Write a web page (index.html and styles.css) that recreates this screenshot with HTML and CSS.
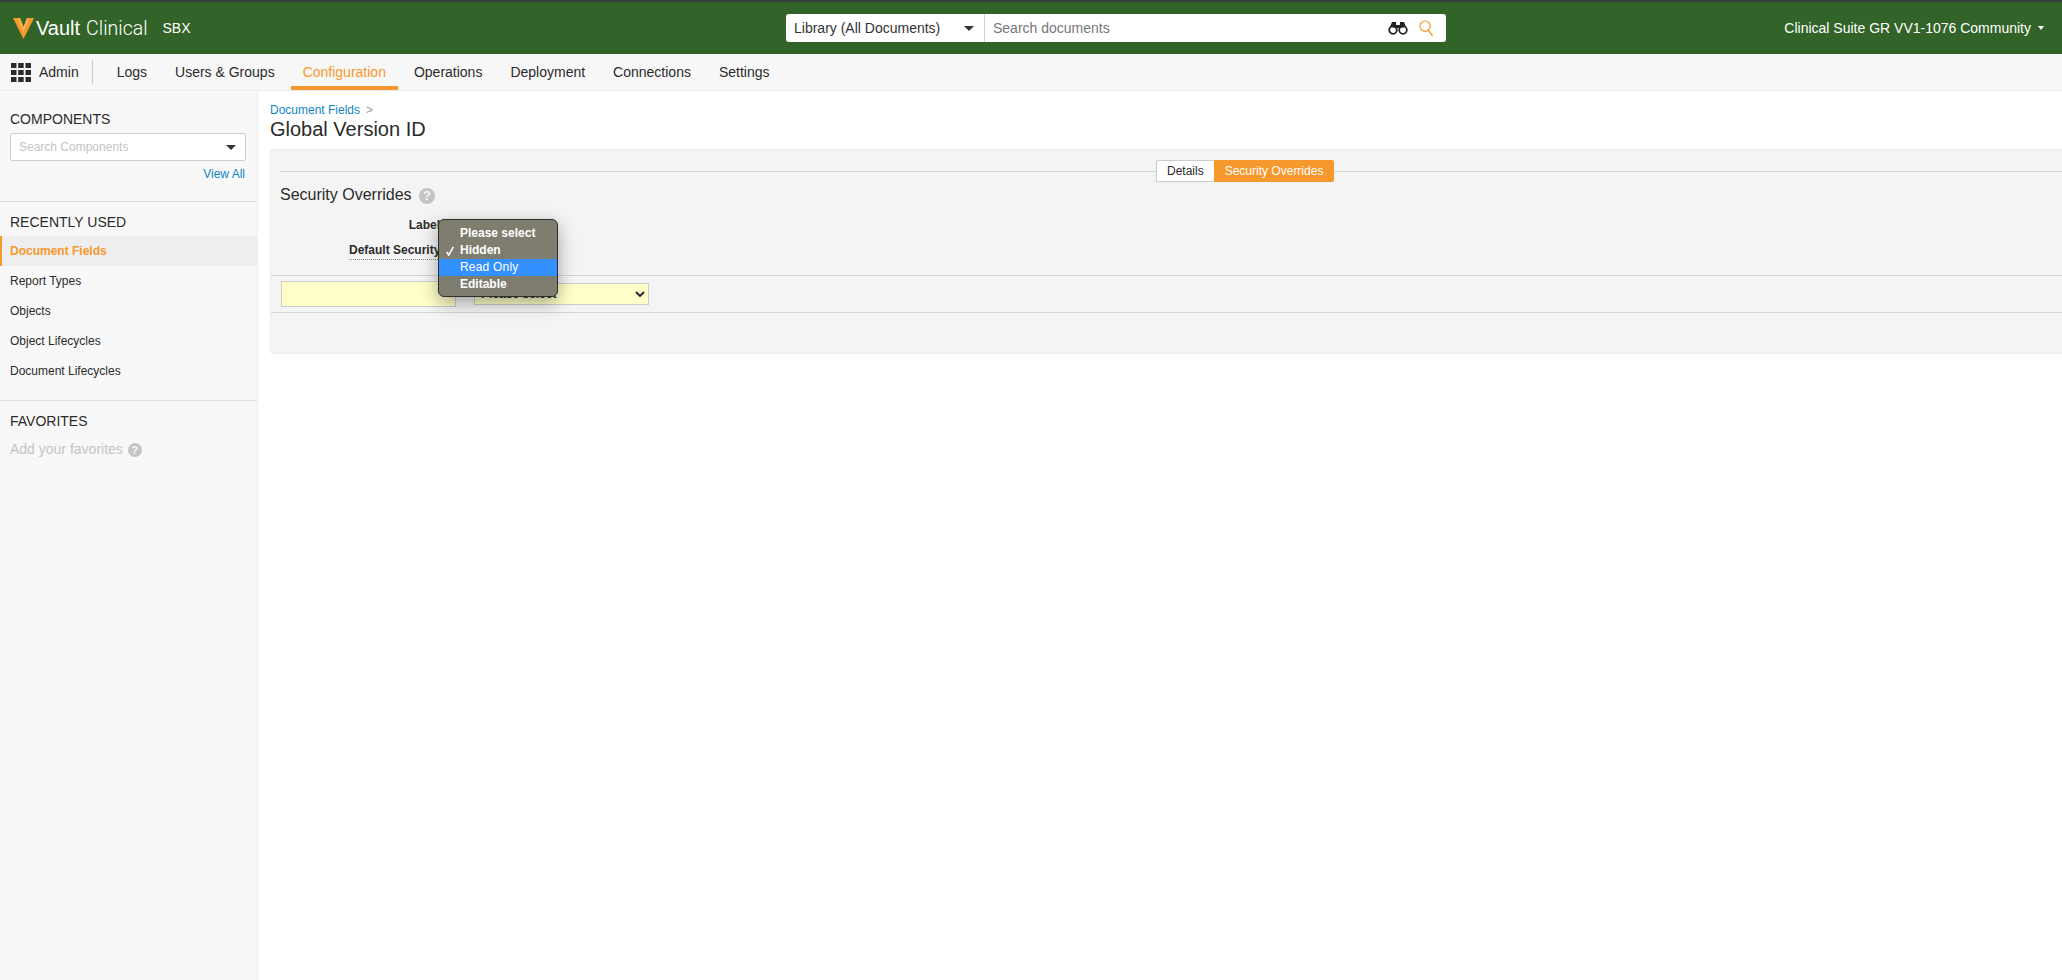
FILE: index.html
```html
<!DOCTYPE html>
<html>
  <head>
    <title>Global Version ID</title>
    <link rel="stylesheet" href="styles.css">
  </head>
  <body>
    <header class="topbar">
      <div class="logo">
        <svg class="logo-mark" viewBox="0 0 21 21">
          <path fill="#f7982d" d="M0 0 H7 L10.5 9 L14 0 H21 L10.5 21 Z"></path>
          <path fill="#f9b14a" d="M4.5 0 H7 L10.5 9 L14 0 H16.5 L10.5 14 Z"></path>
        </svg>
        <span class="logo-vault">Vault</span>
        <span class="logo-clinical">Clinical</span>
        <span class="logo-env">SBX</span>
      </div>
      <div class="search">
        <div class="search-scope">
          <span>Library (All Documents)</span>
          <i class="caret"></i>
        </div>
        <div class="search-input">
          <span>Search documents</span>
          <svg class="icon-binoculars" viewBox="0 0 20 14">
            <circle cx="5" cy="9" r="3.8" fill="none" stroke="#222" stroke-width="1.8"></circle>
            <circle cx="15" cy="9" r="3.8" fill="none" stroke="#222" stroke-width="1.8"></circle>
            <path fill="#222" d="M2 6 L4 1 H8 V4 H12 V1 H16 L18 6 L12 7 H8 Z"></path>
          </svg>
          <svg class="icon-search" viewBox="0 0 16 18">
            <circle cx="6.5" cy="6.5" r="5.5" fill="none" stroke="#f7982d" stroke-width="1.3"></circle>
            <path fill="none" stroke="#f7982d" stroke-width="1.5" d="M10 11 L14.5 17"></path>
          </svg>
        </div>
      </div>
      <div class="vault-name">
        <span>Clinical Suite GR VV1-1076 Community</span>
        <i class="caret caret-white"></i>
      </div>
    </header>

    <nav class="navbar">
      <svg class="icon-apps" viewBox="0 0 20 19">
        <rect x="0" y="0" width="5.5" height="5"></rect>
        <rect x="7.2" y="0" width="5.5" height="5"></rect>
        <rect x="14.5" y="0" width="5.5" height="5"></rect>
        <rect x="0" y="7" width="5.5" height="5"></rect>
        <rect x="7.2" y="7" width="5.5" height="5"></rect>
        <rect x="14.5" y="7" width="5.5" height="5"></rect>
        <rect x="0" y="14" width="5.5" height="5"></rect>
        <rect x="7.2" y="14" width="5.5" height="5"></rect>
        <rect x="14.5" y="14" width="5.5" height="5"></rect>
      </svg>
      <span class="nav-admin">Admin</span>
      <a class="nav-item">Logs</a>
      <a class="nav-item">Users &amp; Groups</a>
      <a class="nav-item active">Configuration</a>
      <a class="nav-item">Operations</a>
      <a class="nav-item">Deployment</a>
      <a class="nav-item">Connections</a>
      <a class="nav-item">Settings</a>
    </nav>

    <div class="page">
      <aside class="sidebar">
        <section class="side-components">
          <h3>COMPONENTS</h3>
          <div class="side-search">
            <span>Search Components</span>
            <i class="caret"></i>
          </div>
          <a class="view-all">View All</a>
        </section>
        <section class="side-recent">
          <h3>RECENTLY USED</h3>
          <a class="side-link active">Document Fields</a>
          <a class="side-link">Report Types</a>
          <a class="side-link">Objects</a>
          <a class="side-link">Object Lifecycles</a>
          <a class="side-link">Document Lifecycles</a>
        </section>
        <section class="side-favorites">
          <h3>FAVORITES</h3>
          <p>Add your favorites <i class="help help-small">?</i></p>
        </section>
      </aside>

      <main class="content">
        <div class="breadcrumb"><a>Document Fields</a><span>&gt;</span></div>
        <h1>Global Version ID</h1>

        <div class="panel">
          <div class="tab-row">
            <hr class="tab-line tab-line-left">
            <div class="tabs">
              <span class="tab">Details</span>
              <span class="tab tab-on">Security Overrides</span>
            </div>
            <hr class="tab-line">
          </div>

          <h2>Security Overrides <i class="help">?</i></h2>

          <div class="field field-label"><label>Label</label></div>
          <div class="field field-security"><label class="dotted">Default Security</label></div>

          <div class="override-row">
            <div class="yellow-input"></div>
            <div class="yellow-select">
              <span>Please select</span>
              <svg class="chevron" viewBox="0 0 10 7">
                <path fill="none" stroke="#222" stroke-width="1.8" d="M1 1 L5 5 L9 1"></path>
              </svg>
            </div>
          </div>

          <div class="popup">
            <div class="popup-row">Please select</div>
            <div class="popup-row">
              <svg class="check" viewBox="0 0 10 12">
                <path fill="none" stroke="#fff" stroke-width="1.8" d="M1 7 L3.5 11 L9 1"></path>
              </svg>
              Hidden
            </div>
            <div class="popup-row selected">Read Only</div>
            <div class="popup-row">Editable</div>
          </div>
        </div>
      </main>
    </div>
  </body>
</html>
```
FILE: styles.css
```css
* {
  box-sizing: border-box;
}
html, body {
  height: 100%;
}
body {
  margin: 0;
  display: flex;
  flex-direction: column;
  overflow: hidden;
  font-family: "Liberation Sans", Arial, sans-serif;
  font-size: 14px;
  color: #2b2b2b;
  background: #fff;
}
h1, h2, h3, p {
  margin: 0;
  font-weight: normal;
}
i {
  font-style: normal;
}

/* top bar */
.topbar {
  display: flex;
  align-items: center;
  flex: none;
  position: relative;
  height: 54px;
  padding: 0 18px 0 13px;
  border-top: 2px solid #3b3d45;
  background: #326429;
  color: #fff;
}
.logo {
  display: flex;
  align-items: center;
  width: 773px;
}
.logo-mark {
  width: 21px;
  height: 21px;
  margin-right: 2px;
}
.logo-vault {
  font-size: 20px;
  margin-right: 6px;
}
.logo-clinical {
  font-family: "Roboto", sans-serif;
  font-weight: 300;
  font-size: 19.5px;
}
.logo-env {
  margin-left: 15px;
  font-size: 14px;
}
.search {
  display: flex;
  width: 660px;
  height: 28px;
  background: #fff;
  border-radius: 3px;
  color: #333;
}
.search-scope {
  display: flex;
  align-items: center;
  justify-content: space-between;
  width: 199px;
  padding: 0 10px 0 8px;
  border-right: 1px solid #cfd0e0;
}
.search-input {
  display: flex;
  align-items: center;
  flex: 1;
  padding-left: 8px;
  color: #777;
}
.search-input span {
  flex: 1;
}
.icon-binoculars {
  width: 20px;
  height: 14px;
  margin-right: 11px;
}
.icon-search {
  width: 15px;
  height: 17px;
  margin-right: 12px;
}
.caret {
  display: block;
  width: 0;
  height: 0;
  border-left: 5px solid transparent;
  border-right: 5px solid transparent;
  border-top: 5px solid #333;
}
.caret-white {
  margin-left: 7px;
  border-left-width: 3px;
  border-right-width: 3px;
  border-top: 4px solid #fff;
}
.vault-name {
  display: flex;
  align-items: center;
  margin-left: auto;
}

/* nav */
.navbar {
  display: flex;
  align-items: center;
  flex: none;
  height: 37px;
  padding-left: 11px;
  background: #f7f7f7;
  border-bottom: 1px solid #eaeaea;
}
.icon-apps {
  width: 20px;
  height: 19px;
  fill: #2b2b2b;
}
.nav-admin {
  margin-left: 8px;
  padding-right: 13px;
  height: 24px;
  line-height: 24px;
  border-right: 1px solid #ccc;
  margin-right: 12px;
}
.nav-item {
  display: flex;
  align-items: center;
  align-self: flex-start;
  height: 36px;
  padding: 4px 12px 0;
  margin-right: 4px;
  border-bottom: 4px solid transparent;
}
.nav-item.active {
  color: #f7982d;
  border-bottom-color: #f7982d;
}

/* sidebar */
.page {
  display: flex;
  flex: 1;
  min-height: 0;
}
.sidebar {
  flex: none;
  width: 258px;
  background: #f8f8f8;
  border-right: 1px solid #eee;
}
.sidebar h3 {
  font-size: 14px;
  line-height: 16px;
}
.sidebar section {
  border-bottom: 1px solid #ddd;
}
.side-components {
  height: 111px;
  padding: 20px 11px 0 10px;
}
.side-search {
  display: flex;
  align-items: center;
  justify-content: space-between;
  height: 28px;
  margin-top: 6px;
  padding: 0 9px 0 8px;
  background: #fff;
  border: 1px solid #ccc;
  border-radius: 2px;
  font-size: 12px;
  color: #c4c4c4;
}
.view-all {
  display: block;
  margin: 6px 1px 0 0;
  text-align: right;
  font-size: 12px;
  color: #0f86c6;
}
.side-recent {
  height: 199px;
  padding-top: 12px;
}
.side-recent h3 {
  padding-left: 10px;
  margin-bottom: 6px;
}
.side-link {
  display: block;
  height: 30px;
  line-height: 30px;
  padding-left: 10px;
  font-size: 12px;
}
.side-link.active {
  padding-left: 8px;
  border-left: 2px solid #f7982d;
  background: #eee;
  color: #f7982d;
  font-weight: bold;
}
.sidebar .side-favorites {
  padding: 12px 10px 0;
  border-bottom: none;
}
.side-favorites p {
  margin-top: 12px;
  color: #c4c4c4;
}
.help {
  display: inline-block;
  width: 16px;
  height: 16px;
  margin-left: 3px;
  border-radius: 50%;
  background: #c4c4c4;
  color: #f4f4f4;
  font-size: 13px;
  font-weight: bold;
  line-height: 16px;
  text-align: center;
}
.help-small {
  width: 14px;
  height: 14px;
  margin-left: 1px;
  font-size: 11px;
  line-height: 14px;
  color: #f8f8f8;
}

/* main */
.content {
  flex: 1;
  min-width: 0;
  padding: 12px 0 0 12px;
}
.breadcrumb {
  height: 14px;
  font-size: 12px;
  line-height: 14px;
  color: #0f86c6;
}
.breadcrumb span {
  margin-left: 6px;
  color: #999;
}
h1 {
  font-size: 20px;
  line-height: 24px;
  color: #2b2b2b;
}
.panel {
  position: relative;
  height: 205px;
  margin-top: 8px;
  padding-top: 10px;
  background: #f4f4f4;
  border: 1px solid #ececec;
  border-right: none;
  border-radius: 4px 0 0 4px;
}
.tab-row {
  display: flex;
  align-items: center;
  height: 22px;
  padding-left: 9px;
}
.tab-line {
  flex: 1;
  margin: 0;
  border: none;
  border-top: 1px solid #d6d6d6;
}
.tab-line-left {
  flex: none;
  width: 876px;
}
.tabs {
  display: flex;
  font-size: 12px;
}
.tab {
  height: 22px;
  line-height: 20px;
  padding: 0 10px;
  background: #fff;
  border: 1px solid #ccc;
  border-right: none;
  border-radius: 2px 0 0 2px;
}
.tab-on {
  line-height: 22px;
  padding: 0 11px;
  background: #f7982d;
  border: none;
  border-radius: 0 2px 2px 0;
  color: #fff;
}
h2 {
  margin: 1px 0 0 9px;
  font-size: 16px;
  line-height: 24px;
}
.field {
  display: flex;
  justify-content: flex-end;
  width: 169px;
  margin-top: 11px;
  height: 14px;
  line-height: 14px;
  font-size: 12px;
  font-weight: bold;
}
.dotted {
  flex: none;
  height: 17px;
  width: 91px;
  border-bottom: 1px dotted #888;
  white-space: nowrap;
}
.override-row {
  display: flex;
  align-items: center;
  gap: 18px;
  height: 38px;
  margin-top: 18px;
  padding-left: 10px;
  border-top: 1px solid #d6d6d6;
  border-bottom: 1px solid #d6d6d6;
}
.yellow-input {
  width: 175px;
  height: 26px;
  background: #ffffc8;
  border: 1px solid #ccc;
}
.yellow-select {
  display: flex;
  align-items: center;
  justify-content: space-between;
  width: 175px;
  height: 22px;
  padding: 0 3px 0 6px;
  background: #ffffc8;
  border: 1px solid #ccc;
  font-size: 12px;
  font-weight: bold;
}
.chevron {
  width: 10px;
  height: 7px;
}
.popup {
  position: absolute;
  left: 167px;
  top: 69px;
  width: 120px;
  height: 78px;
  padding-top: 5px;
  background: #7e7d70;
  border: 1px solid #2e2e2e;
  border-radius: 6px;
  box-shadow: 0 6px 18px rgba(0, 0, 0, .35);
  color: #fff;
  font-size: 12px;
  font-weight: bold;
}
.popup-row {
  position: relative;
  height: 17px;
  line-height: 17px;
  padding-left: 21px;
}
.popup-row.selected {
  background: #3390ff;
  font-weight: normal;
  letter-spacing: .2px;
}
.check {
  position: absolute;
  left: 6px;
  top: 4px;
  width: 10px;
  height: 10px;
}
```
